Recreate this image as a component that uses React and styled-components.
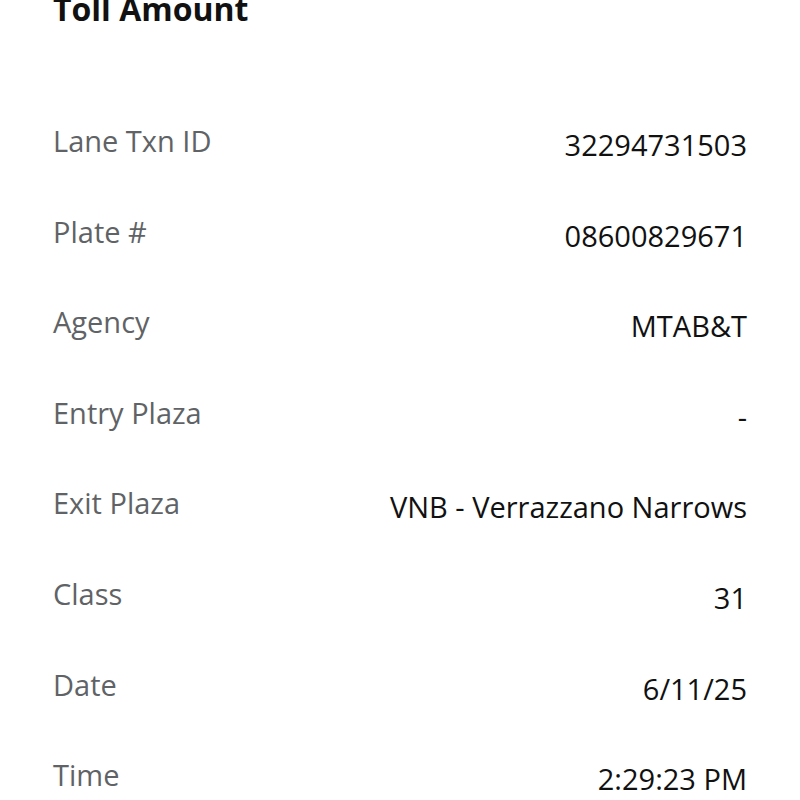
import React from "react";
import styled, { createGlobalStyle } from "styled-components";

const Global = createGlobalStyle`
  html, body { margin: 0; padding: 0; background: #ffffff; }
  body { font-family: "Open Sans", "Noto Sans", sans-serif; overflow: hidden; }
`;

const Page = styled.div`
  width: 800px;
  height: 800px;
  overflow: hidden;
  box-sizing: border-box;
  padding: 0 53px;
`;

const Heading = styled.h2`
  margin: -12px 0 0 0;
  font-size: 32px;
  line-height: 42px;
  font-weight: 700;
  color: #111111;
  height: 133px;
`;

const List = styled.dl`
  margin: 0;
  display: flex;
  flex-direction: column;
`;

const Row = styled.div`
  display: flex;
  justify-content: space-between;
  align-items: flex-start;
  height: 90.6px;
`;

const Label = styled.dt`
  margin: 0;
  font-size: 29px;
  line-height: 40px;
  color: #5f6366;
`;

const Value = styled.dd`
  margin: 4px 0 0 0;
  font-size: 29px;
  line-height: 40px;
  color: #111111;
  text-align: right;
`;

const rows = [
  ["Lane Txn ID", "32294731503"],
  ["Plate #", "08600829671"],
  ["Agency", "MTAB&T"],
  ["Entry Plaza", "-"],
  ["Exit Plaza", "VNB - Verrazzano Narrows"],
  ["Class", "31"],
  ["Date", "6/11/25"],
  ["Time", "2:29:23 PM"],
];

export default function App() {
  return (
    <>
      <Global />
      <Page>
        <Heading>Toll Amount</Heading>
        <List>
          {rows.map(([k, v]) => (
            <Row key={k}>
              <Label>{k}</Label>
              <Value>{v}</Value>
            </Row>
          ))}
        </List>
      </Page>
    </>
  );
}
